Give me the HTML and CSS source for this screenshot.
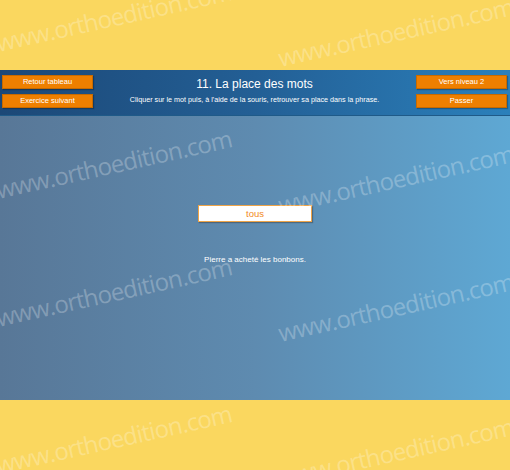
FILE: index.html
```html
<!DOCTYPE html>
<html lang="fr">
<head>
<meta charset="utf-8">
<title>La place des mots</title>
<link rel="stylesheet" href="styles.css">
</head>
<body>
<div class="page">
  <div class="band"></div>
  <div class="panel">
    <header class="header">
      <div class="btn-col">
        <button class="btn">Retour tableau</button>
        <button class="btn">Exercice suivant</button>
      </div>
      <div class="titles">
        <h1 class="title">11. La place des mots</h1>
        <p class="subtitle">Cliquer sur le mot puis, à l'aide de la souris, retrouver sa place dans la phrase.</p>
      </div>
      <div class="btn-col">
        <button class="btn">Vers niveau 2</button>
        <button class="btn">Passer</button>
      </div>
    </header>
    <main class="stage">
      <div class="word">tous</div>
      <p class="sentence">Pierre a acheté les bonbons.</p>
    </main>
  </div>
  <div class="band"></div>
  <div class="watermarks" aria-hidden="true">
    <span class="wm wm-a">www.orthoedition.com</span>
    <span class="wm wm-b">www.orthoedition.com</span>
    <span class="wm wm-c">www.orthoedition.com</span>
    <span class="wm wm-d">www.orthoedition.com</span>
    <span class="wm wm-e">www.orthoedition.com</span>
    <span class="wm wm-f">www.orthoedition.com</span>
    <span class="wm wm-g">www.orthoedition.com</span>
    <span class="wm wm-h">www.orthoedition.com</span>
  </div>
</div>
</body>
</html>
```

FILE: styles.css
```css
html, body {
  margin: 0;
  padding: 0;
}
body {
  width: 510px;
  height: 470px;
  overflow: hidden;
  background: #fad75f;
  font-family: "Liberation Sans", Arial, sans-serif;
}
.page {
  position: relative;
  display: flex;
  flex-direction: column;
  width: 510px;
  height: 470px;
}
.band {
  height: 70px;
  flex: none;
}
.panel {
  height: 330px;
  flex: none;
  display: flex;
  flex-direction: column;
}
.header {
  height: 46px;
  flex: none;
  box-sizing: border-box;
  padding: 5px 3px 0 2px;
  display: grid;
  grid-template-columns: 91px 1fr 91px;
  background: linear-gradient(90deg, #1c4877 0%, #235f95 50%, #2b80bb 100%);
  border-bottom: 1px solid #1f5a88;
  position: relative;
  z-index: 2;
}
.btn-col {
  display: flex;
  flex-direction: column;
  gap: 5px;
}
.btn {
  height: 14px;
  width: 91px;
  margin: 0;
  padding: 0;
  border: 1px solid #c76a00;
  background: #ee7f00;
  color: #fff;
  font-family: "Liberation Sans", Arial, sans-serif;
  font-size: 7.5px;
  line-height: 12px;
  text-align: center;
  box-shadow: 1px 1px 1px rgba(0,0,0,0.25);
}
.titles {
  display: flex;
  flex-direction: column;
  align-items: center;
  color: #fff;
}
.title {
  margin: 2px 0 0;
  font-size: 12px;
  font-weight: normal;
  line-height: 14px;
}
.subtitle {
  margin: 4px 0 0;
  font-size: 7.2px;
  line-height: 9px;
}
.stage {
  flex: 1;
  display: flex;
  flex-direction: column;
  align-items: center;
  background: linear-gradient(90deg, #587797 0%, #5e8bb0 50%, #5ea8d4 100%);
  position: relative;
  z-index: 0;
}
.word {
  margin-top: 89px;
  width: 112px;
  height: 15px;
  border: 1px solid #efa447;
  background: #fff;
  color: #f28a1c;
  font-size: 9.5px;
  line-height: 15px;
  text-align: center;
  box-shadow: 1px 1px 1px rgba(60,60,60,0.45);
  position: relative;
  z-index: 3;
}
.sentence {
  margin: 33px 0 0;
  color: #fff;
  font-size: 8px;
  line-height: 10px;
  position: relative;
  z-index: 3;
}
.watermarks {
  position: absolute;
  inset: 0;
  pointer-events: none;
  z-index: 1;
  overflow: hidden;
}
.wm {
  position: absolute;
  left: 0;
  top: 0;
  font-family: "Open Sans", sans-serif;
  font-size: 24px;
  letter-spacing: -0.8px;
  line-height: 24px;
  white-space: nowrap;
  color: rgba(255, 255, 255, 0.26);
  transform-origin: 0 80%;
  transform: rotate(-12.5deg);
}
.wm-a { left: -2px; top: 31px; }
.wm-b { left: 280px; top: 46px; }
.wm-c { left: -2px; top: 178px; }
.wm-d { left: 280px; top: 193px; }
.wm-e { left: -2px; top: 306px; }
.wm-f { left: 280px; top: 321px; }
.wm-g { left: -2px; top: 453px; }
.wm-h { left: 280px; top: 466px; }
```
